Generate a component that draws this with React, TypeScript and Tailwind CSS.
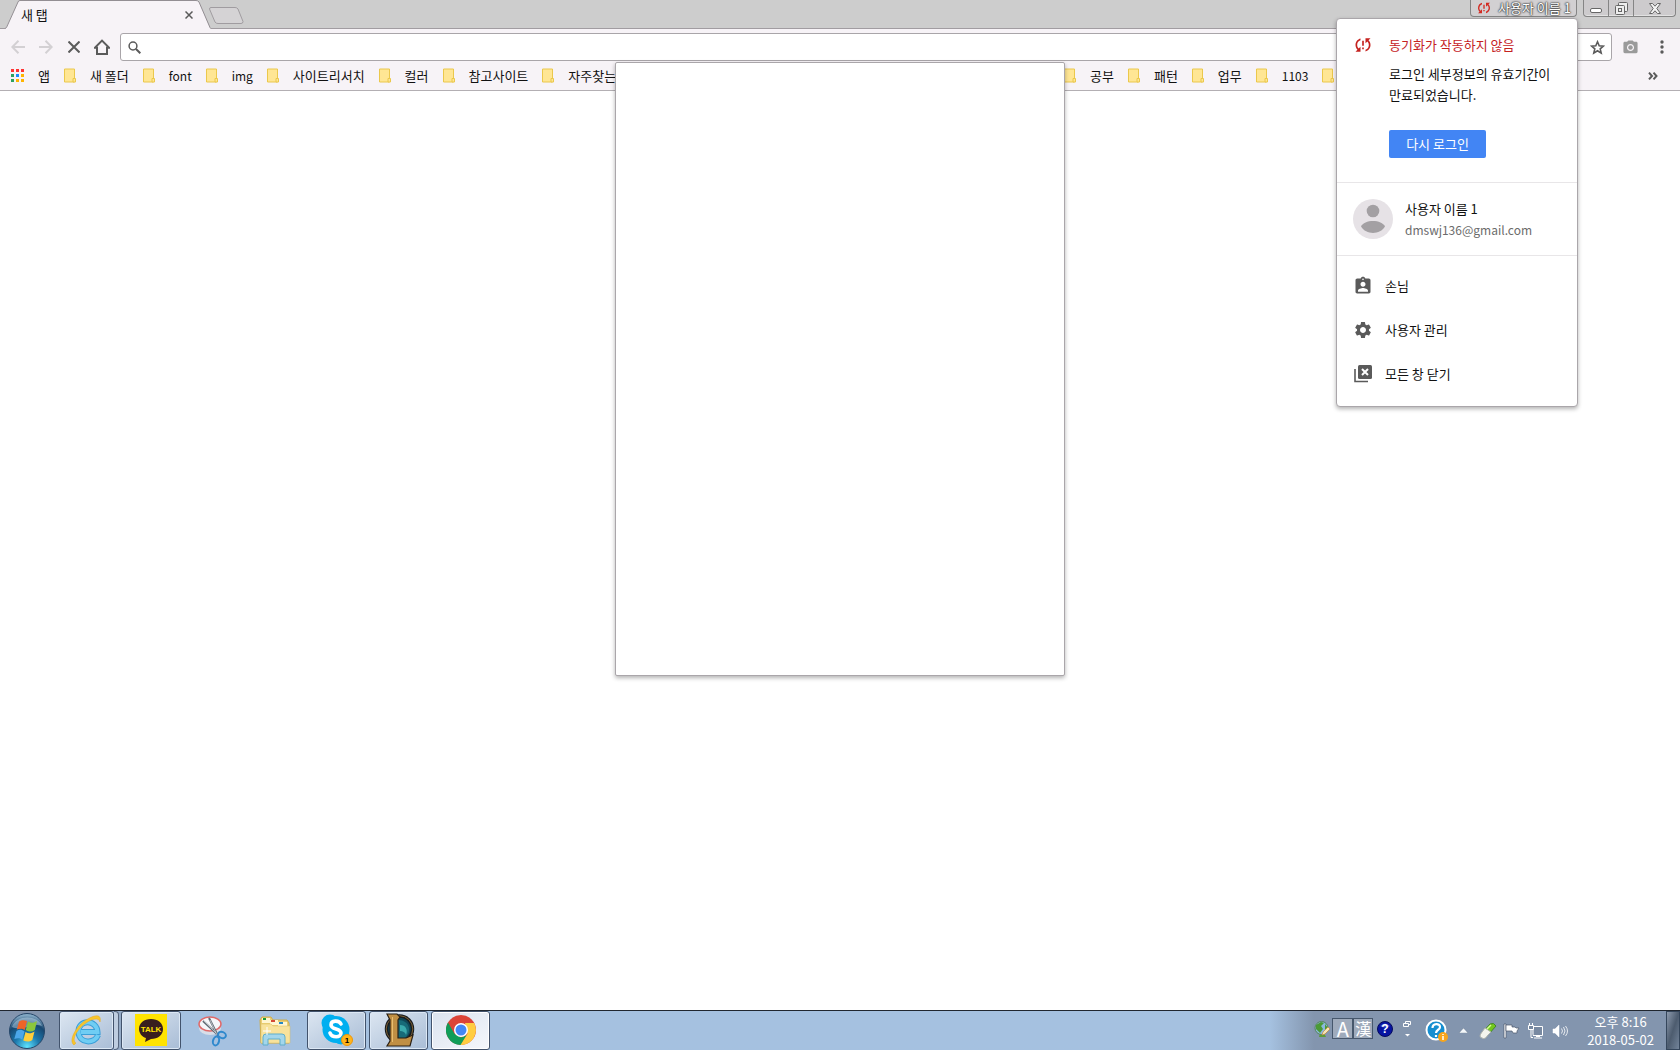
import React from 'react';
import { MdAssignmentInd, MdPhotoCamera, MdSettings, MdSyncProblem } from 'react-icons/md';

const leftBookmarks = ['새 폴더', 'font', 'img', '사이트리서치', '컬러', '참고사이트', '자주찾는'];
const rightBookmarks = ['공부', '패턴', '업무', '1103', ''];

function FolderIcon() {
    return (
        <svg width="12" height="15" viewBox="0 0 12 15" className="shrink-0">
            <path d="M.5 1h10v13h-10z" fill="#ffe694" stroke="#ebc84c" />
            <path d="M9 10.5h2.5V14H9z" fill="#ffe694" stroke="#ebc84c" />
        </svg>
    );
}

function Bookmark({ label }: { label: string }) {
    const latin = /^[a-z0-9]+$/.test(label);
    return (
        <a href="#" aria-label={label || 'folder'} className="flex shrink-0 items-center gap-3.5 whitespace-nowrap">
            <FolderIcon />
            {label && <span className={latin ? 'text-xs' : ''}>{label}</span>}
        </a>
    );
}

function TabStrip() {
    return (
        <div className="flex h-[29px] items-start border-b border-[#a19ca1] bg-[#cdcdcd]">
            <div className="relative z-10 ml-[5px] flex h-[29px] w-[206px] shrink-0 items-center pr-3.5 pl-4">
                <svg className="absolute inset-0" width="206" height="29" viewBox="0 0 206 29" fill="none">
                    <path d="M0 29 L1 28 L13 2 Q13.500 .5 15 .5 H191 Q193 .5 194 2 L205 28 L206 29Z" fill="#f7f3f7" />
                    <path d="M0 28.500 L1.500 27.500 L13 2 Q13.500 .5 15 .5 H191 Q193 .5 194 2 L205 27.500 L206 28.500" stroke="#938e93" />
                </svg>
                <span className="relative flex-1">새 탭</span>
                <button aria-label="탭 닫기" className="relative flex h-4 w-4 items-center justify-center">
                    <svg width="8" height="8" viewBox="0 0 8 8" stroke="#5a5a5a" strokeWidth="1.500"><path d="M.5 .5l7 7M7.500 .5l-7 7" /></svg>
                </button>
            </div>
            <button aria-label="새 탭" className="-ml-0.5 pt-[7px]">
                <svg width="35" height="18" viewBox="0 0 35 18"><path d="M2 .5H26Q28 .5 29 2L34 14.500Q34 16.500 32 16.500H9Q7 16.500 6 15L.5 2Q.5 .5 2 .5Z" fill="#d5d3d5" stroke="#a09ca0" /></svg>
            </button>
            <div className="ml-auto flex gap-1.5 pr-1">
                <button className="flex h-[17px] w-[107px] items-center justify-center gap-1.5 rounded-b border border-t-0 border-[#858585] bg-[#d2d0d2]">
                    <MdSyncProblem size={16} color="#d32a22" />
                    <span className="whitespace-nowrap text-white [text-shadow:0_0_1px_#333,0_0_2px_#333,0_0_2px_#333]">사용자 이름 1</span>
                </button>
                <div className="flex h-[17px] rounded-b border border-t-0 border-[#858585] bg-[#cdcbcd] shadow-[inset_0_-1px_0_#e2e2e2]">
                    <button aria-label="최소화" className="flex w-[25px] items-center justify-center border-r border-[#858585]">
                        <svg width="12" height="5" className="mt-1"><rect x=".5" y=".5" width="11" height="4" rx="1.500" fill="#fff" stroke="#666" /></svg>
                    </button>
                    <button aria-label="이전 크기로 복원" className="flex w-[25px] items-center justify-center border-r border-[#858585]">
                        <svg width="13" height="13" viewBox="0 0 13 13" fill="#eee" stroke="#666">
                            <rect x="3.500" y=".5" width="9" height="9" rx="1" />
                            <rect x=".5" y="3.500" width="9" height="9" rx="1" />
                            <rect x="3.500" y="6.500" width="3" height="3" />
                        </svg>
                    </button>
                    <button aria-label="닫기" className="flex w-[41px] items-center justify-center">
                        <svg width="12" height="11" viewBox="0 0 12 11"><path d="M.5 .5h3L6 3.200 8.500 .5h3L7.800 5.500l3.700 5h-3L6 7.800 3.500 10.500h-3l3.700-5z" fill="#f4f4f4" stroke="#666" /></svg>
                    </button>
                </div>
            </div>
        </div>
    );
}

function Toolbar() {
    return (
        <div className="flex h-[33px] items-center bg-[#f7f3f7] pt-1 pr-0.5 pl-1 pb-px">
            <button aria-label="뒤로" className="flex w-7 justify-center">
                <svg width="14" height="14" viewBox="0 0 14 14" fill="none" stroke="#d3d0d3" strokeWidth="2"><path d="M14 7H1.500M7.500 .8L1.300 7l6.200 6.200" /></svg>
            </button>
            <button aria-label="앞으로" className="flex w-7 justify-center">
                <svg width="14" height="14" viewBox="0 0 14 14" fill="none" stroke="#d3d0d3" strokeWidth="2"><path d="M0 7h12.500M6.500 .8L12.700 7l-6.200 6.200" /></svg>
            </button>
            <button aria-label="중지" className="flex w-7 justify-center">
                <svg width="12" height="12" viewBox="0 0 12 12" stroke="#5a5a5a" strokeWidth="2"><path d="M.5 .5l11 11M11.500 .5l-11 11" /></svg>
            </button>
            <button aria-label="홈" className="flex w-7 justify-center">
                <svg width="16" height="16" viewBox="0 0 16 16" fill="none" stroke="#5a5a5a" strokeWidth="2"><path d="M.8 8.800H3V15h10V8.800h2.200L8 1.600z" /></svg>
            </button>
            <div className="ml-1 flex h-7 flex-1 items-center rounded-[3px] border border-[#a9a5a9] bg-white pr-1.5 pl-[7px]">
                <svg width="13" height="13" viewBox="0 0 13 13" fill="none" stroke="#5a5a5a"><circle cx="5" cy="5" r="3.900" strokeWidth="1.500" /><path d="M8 8l4.300 4.300" strokeWidth="2" /></svg>
                <input aria-label="주소창" type="text" className="h-full min-w-0 flex-1 px-2 outline-none" />
                <button aria-label="북마크">
                    <svg width="15" height="15" viewBox="0 0 15 15" fill="none" stroke="#5a5a5a" strokeWidth="1.600">
                        <path d="M7.500 1.800l1.700 3.900 4.200.4-3.200 2.800 1 4.200-3.700-2.300-3.700 2.300 1-4.200L1.600 6.100l4.200-.4z" />
                    </svg>
                </button>
            </div>
            <button aria-label="캡처" className="ml-0.5 flex w-8 justify-center"><MdPhotoCamera size={17} color="#9a9a9a" /></button>
            <button aria-label="메뉴" className="flex w-8 justify-center">
                <svg width="4" height="14" viewBox="0 0 4 14" fill="#5a5a5a"><circle cx="2" cy="2" r="1.700" /><circle cx="2" cy="7" r="1.700" /><circle cx="2" cy="12" r="1.700" /></svg>
            </button>
        </div>
    );
}

function BookmarkBar() {
    const colors = ['#f33', '#f33', '#f33', '#2da160', '#1a8cff', '#ffb400', '#2da160', '#ffb400', '#ffb400'];
    return (
        <nav className="flex h-[29px] items-center border-b border-[#b3afb3] bg-[#f7f3f7] pb-px">
            <div className="flex w-[1064px] shrink-0 items-center gap-3.5 pl-[11px]">
                <a href="#" className="flex shrink-0 items-center gap-3.5">
                    <span className="grid grid-cols-3 gap-0.5">
                        {colors.map((c, i) => <span key={i} className="h-[3px] w-[3px]" style={{ backgroundColor: c }} />)}
                    </span>
                    앱
                </a>
                {leftBookmarks.map((b) => <Bookmark key={b} label={b} />)}
            </div>
            <div className="flex items-center gap-3.5">
                {rightBookmarks.map((b) => <Bookmark key={b} label={b} />)}
            </div>
            <button aria-label="북마크 더보기" className="mr-[22px] ml-auto">
                <svg width="10" height="8" viewBox="0 0 10 8" fill="none" stroke="#5a5a5a" strokeWidth="2"><path d="M1 .7L4 4 1 7.300M5.500 .7l3 3.300-3 3.300" /></svg>
            </button>
        </nav>
    );
}

function CloseWindowsIcon() {
    return (
        <svg width="18" height="18" viewBox="0 0 18 18">
            <path d="M1 4v12.500h13" fill="none" stroke="#5a5a5a" strokeWidth="1.600" />
            <rect x="4" y="0" width="14" height="14" rx="1.500" fill="#5a5a5a" />
            <path d="M8 4l6 6M14 4l-6 6" stroke="#fff" strokeWidth="2" />
        </svg>
    );
}

function ProfileMenu() {
    return (
        <div className="absolute top-[18px] right-[102px] z-30 w-[242px] rounded-sm border border-[#aaa6aa] bg-white pb-2.5 shadow-[0_2px_4px_rgba(0,0,0,0.3)]">
            <section className="flex gap-4 border-b border-[#e8e6e8] pt-4 pb-6 pl-4">
                <MdSyncProblem size={20} color="#c5221f" className="shrink-0" />
                <div>
                    <h2 className="leading-5 text-[#c5221f]">동기화가 작동하지 않음</h2>
                    <p className="mt-2 leading-[21px] whitespace-nowrap">로그인 세부정보의 유효기간이<br />만료되었습니다.</p>
                    <button className="mt-[25px] h-7 w-[97px] rounded-xs bg-[#4285f4] text-white">다시 로그인</button>
                </div>
            </section>
            <section className="flex h-[73px] items-center gap-3 border-b border-[#e8e6e8] pl-4">
                <svg width="40" height="40" viewBox="0 0 40 40">
                    <circle cx="20" cy="20" r="20" fill="#e6e2e6" />
                    <circle cx="20" cy="12" r="6.300" fill="#a3a0a3" />
                    <path d="M8 27.500C11 20 29 20 32 27.500 27 36 13 36 8 27.500z" fill="#a3a0a3" />
                </svg>
                <div className="leading-[21px]">
                    <p>사용자 이름 1</p>
                    <p className="text-xs leading-[21px] text-[#6b6b6b]">dmswj136@gmail.com</p>
                </div>
            </section>
            <div className="flex flex-col pt-2">
                <button className="flex h-11 items-center gap-3 pl-4"><MdAssignmentInd size={20} color="#5a5a5a" />손님</button>
                <button className="flex h-11 items-center gap-3 pl-4"><MdSettings size={20} color="#5a5a5a" />사용자 관리</button>
                <button className="flex h-11 items-center gap-[13px] pl-[17px]"><CloseWindowsIcon />모든 창 닫기</button>
            </div>
        </div>
    );
}

function StartOrb() {
    return (
        <svg width="38" height="38" viewBox="0 0 38 38">
            <defs>
                <radialGradient id="orb" cx=".5" cy=".95" r=".9">
                    <stop offset="0" stopColor="#5ee4ff" />
                    <stop offset=".4" stopColor="#1c78ac" />
                    <stop offset=".75" stopColor="#174770" />
                    <stop offset="1" stopColor="#83a9c4" />
                </radialGradient>
            </defs>
            <circle cx="19" cy="19" r="17.500" fill="url(#orb)" stroke="#26476a" />
            <path d="M4 15C8 3 29 2 34 14 25 10 15 20 4 15z" fill="#c7deed" opacity=".45" />
            <path d="M11 9.500c3-2 5.500-1.500 8-.5l-2.200 9c-3-2-5-1.500-8-.5z" fill="#ee6428" />
            <path d="M20 9.500c3 2 6 1.500 9-.5l-2.200 9c-3 2-5.500 2-9 0z" fill="#8cc63c" />
            <path d="M8.500 19c3-2 5.500-1.500 8 .5l-2.200 8c-3-2-5-1.500-8-.5z" fill="#4ba6e8" />
            <path d="M17.500 20c3 2 6 1.500 9-.5l-2.200 8.500c-3 2-5.500 2-9 .5z" fill="#ffce3a" />
        </svg>
    );
}

function IeIcon() {
    return (
        <svg width="32" height="32" viewBox="0 0 32 32" fill="none">
            <path d="M27 21C24 30 8 30 7.500 18 7 5 26 5 26.500 18H10" stroke="#3a9fd8" strokeWidth="6" />
            <path d="M27 21C24 30 8 30 7.500 18 7 5 26 5 26.500 18H10" stroke="#6fcdf4" strokeWidth="4" />
            <path d="M3 31C-3 27 5 12 15 6 23 1 31-1 29 8 28 3 21 5 15 9 6 15 0 26 5 29z" fill="#f8c52b" stroke="#e7a920" strokeWidth=".5" />
        </svg>
    );
}

function TalkIcon() {
    return (
        <svg width="32" height="32" viewBox="0 0 32 32">
            <path d="M0 0h32v32H0z" fill="#ffe300" />
            <path d="M16 5c7 0 12 4 12 10s-5 10-12 10l-6 3 1-4C7 23 4 19 4 15 4 9 9 5 16 5z" fill="#381e1e" />
            <text x="16" y="18" textAnchor="middle" fontSize="8" fontWeight="bold" fill="#ffe300" fontFamily="Liberation Sans">TALK</text>
        </svg>
    );
}

function SnipIcon() {
    return (
        <svg width="30" height="32" viewBox="0 0 30 32" fill="none">
            <ellipse cx="12" cy="13" rx="11" ry="7" fill="#d8dee8" />
            <ellipse cx="12" cy="9" rx="11" ry="7" fill="#f5f6f9" stroke="#e06a6a" strokeWidth="1.500" />
            <path d="M5 6l14 13M11 3l9 18" stroke="#626b74" strokeWidth="2" />
            <path d="M6 6l12 12M12 5l7 15" stroke="#d7dce0" strokeWidth=".7" />
            <ellipse cx="24" cy="20" rx="4" ry="3" stroke="#3089cd" strokeWidth="2" transform="rotate(20 24 20)" />
            <ellipse cx="18" cy="26" rx="3" ry="4.500" stroke="#3089cd" strokeWidth="2" transform="rotate(15 18 26)" />
        </svg>
    );
}

function ExplorerIcon() {
    return (
        <svg width="34" height="32" viewBox="0 0 34 32">
            <path d="M2 5l2-3h9l2 3h14l2 3v20H3z" fill="#edcf73" stroke="#cfae4b" />
            <path d="M4 3h8v5H4zM12 5h8v5h-8zM20 7h9v5h-9z" fill="#fff5d0" />
            <path d="M5 3h3v2H5z" fill="#1c9b38" /><path d="M13 5h4v2h-4z" fill="#d54836" /><path d="M21 7h4v2h-4z" fill="#2588c5" />
            <path d="M3 9h10l2 2h17v17H3z" fill="#f8e29b" stroke="#d9bd65" strokeWidth=".5" />
            <path d="M5 30V22q0-3 3-3h16q3 0 3 3v8h-5v-6H10v6z" fill="#a3d6eb" stroke="#5faecb" />
            <path d="M9 12v8M5 16h8" stroke="#fff" />
        </svg>
    );
}

function SkypeIcon() {
    return (
        <svg width="32" height="32" viewBox="0 0 32 32">
            <circle cx="9" cy="9" r="8.500" fill="#00aff0" /><circle cx="20" cy="22" r="8.500" fill="#00aff0" />
            <circle cx="15" cy="15.500" r="13.500" fill="#00aff0" />
            <path d="M20 10c-2-4-10-4-10 1 0 5 10 3 10 8 0 5-9 5-11 0" fill="none" stroke="#fff" strokeWidth="3.600" strokeLinecap="round" />
            <circle cx="26" cy="26" r="5.500" fill="#ffb51b" stroke="#ec950b" />
            <text x="26" y="29" textAnchor="middle" fontSize="8" fontWeight="bold" fontFamily="Liberation Sans">1</text>
        </svg>
    );
}

function LeagueIcon() {
    return (
        <svg width="32" height="34" viewBox="0 0 32 34">
            <circle cx="16.500" cy="16" r="13" fill="#0f4656" stroke="#171b20" strokeWidth="3.500" />
            <circle cx="16.500" cy="16" r="13.300" fill="none" stroke="#7d6233" />
            <path d="M15 7c12 0 14 12 7 18H15z" fill="#176a78" />
            <path d="M17 12c6 0 8 5 6 10-1-3-3-4-6-4z" fill="#3aa9ac" />
            <path d="M4 1h10l3 3-2 3v18h8l7-3-3 11H4l3-5V7z" fill="#c08f44" stroke="#2b2115" strokeWidth="1.200" />
            <path d="M9.500 4v25" stroke="#e8be70" />
        </svg>
    );
}

function ChromeIcon() {
    return (
        <svg width="30" height="30" viewBox="0 0 30 30">
            <circle cx="15" cy="15" r="15" fill="#dc4437" />
            <path d="M2 7.500L8.500 18.700 15 22.500 21 20 15 30A15 15 0 0 1 2 7.500z" fill="#109d58" />
            <path d="M28.200 8A15 15 0 0 1 14.500 30L21.500 18.800 19 8z" fill="#ffcd41" />
            <circle cx="15" cy="15" r="7" fill="#fff" />
            <circle cx="15" cy="15" r="5.500" fill="#4387f5" />
        </svg>
    );
}

const taskButton = 'flex h-[39px] items-center justify-center rounded-[3px] border border-[#42536c] bg-linear-to-br from-[#dce6f1] to-[#a9bdd6] pb-0.5 shadow-[inset_0_0_0_1px_#dce8f5]';

function Tray() {
    return (
        <div className="ml-auto flex h-full items-center bg-linear-to-r from-[#a5c1e0] to-[#8395ae] to-[44px] pb-1 pl-[43px]">
            <svg width="18" height="18" viewBox="0 0 18 18">
                <path d="M6 17l1-4h4l2 4z" fill="#5c9a3a" />
                <circle cx="8.500" cy="8" r="6.500" fill="#8cb8de" stroke="#57865a" />
                <path d="M3 5l5-3 3 1-3 3 2 3-3 4-4-4zM12 4l3 4-3 2z" fill="#4b9a35" />
                <path d="M9 15l1-3 5-5 2 2-5 5z" fill="#f4e6b8" stroke="#c98a3c" strokeWidth=".7" />
            </svg>
            <button className="ml-px h-[21px] w-[21px] border border-[#46576c] bg-[#9fabbc] text-xl leading-[19px] text-white">A</button>
            <button className="h-[21px] w-5 border border-[#46576c] bg-[#9fabbc] text-base leading-[17px] text-white">漢</button>
            <svg width="16" height="16" viewBox="0 0 16 16" className="ml-1">
                <circle cx="8" cy="8" r="7.500" fill="#0714a1" stroke="#050b5d" />
                <path d="M3 5Q8 0 13 5 8 8 3 5z" fill="#6875df" opacity=".6" />
                <text x="8" y="12" textAnchor="middle" fontSize="12" fontWeight="bold" fill="#fff" fontFamily="Liberation Sans">?</text>
            </svg>
            <svg width="10" height="18" viewBox="0 0 10 18" className="ml-2.5" fill="none" stroke="#fff">
                <path d="M2.500 3V1.500h5v3H6M.5 3.500h5v3h-5z" /><path d="M2 14h5l-2.500 2.500z" fill="#fff" stroke="none" />
            </svg>
            <div className="flex items-center pt-1">
                <svg width="24" height="24" viewBox="0 0 24 24" className="ml-3">
                    <circle cx="11" cy="11" r="9.500" fill="#168ed0" stroke="#fff" strokeWidth="2" />
                    <path d="M7.500 9c0-5 7.500-5 7.500-1 0 3-4 2.500-4 6M11 16v2" fill="none" stroke="#fff" strokeWidth="2.200" />
                    <circle cx="18" cy="18" r="5" fill="#f7a51c" /><path d="M18 15v1M18 17v4" stroke="#fff" strokeWidth="1.500" />
                </svg>
                <button aria-label="숨겨진 아이콘 표시" className="ml-2.5"><svg width="9" height="5"><path d="M0 5l4.500-5L9 5z" fill="#f4f8fb" stroke="#46576c" strokeWidth=".3" /></svg></button>
                <svg width="18" height="18" viewBox="0 0 18 18" className="ml-[11px]">
                    <path d="M3 11L11 2q4-2 6 2L9 13z" fill="#72c71f" stroke="#43852d" />
                    <path d="M3 10q-4 5 0 6 3 2 6-3l3-3-6-4z" fill="#f4f4ee" stroke="#aeb2ac" /><path d="M8 7l4-4" stroke="#d7ff95" strokeWidth="1.500" />
                </svg>
                <svg width="17" height="16" viewBox="0 0 17 16" className="ml-1.5" fill="#fff" stroke="#4b586a" strokeWidth=".7"><path d="M1 1h2v14H1z" /><path d="M3 2h6v2h3l1 1h3l-2 3v2h-4L9 8H3z" /></svg>
                <svg width="16" height="16" viewBox="0 0 16 16" className="ml-2" fill="#7889a1" stroke="#fff"><path d="M5 3.500h9.500v9H5zM6 15h8M8 13.500h4" /><path d="M1.500 0v3M4.500 0v3M.5 2.500h5v4h-5zM3 6.500v8h2" /></svg>
                <svg width="16" height="16" viewBox="0 0 16 16" className="ml-2" fill="#fff" stroke="#fff"><path d="M1 6h2l4-4v12l-4-4H1z" strokeWidth=".5" /><path d="M9.500 5.500q2 2.500 0 5M11.500 4q3 4 0 8M13.500 3q4 5 0 10" fill="none" strokeWidth=".8" /></svg>
            </div>
            <time className="mr-3 ml-[19px] pt-1 text-center leading-[18px] whitespace-nowrap text-white">오후 8:16<br />2018-05-02</time>
        </div>
    );
}

function Taskbar() {
    return (
        <footer className="flex h-10 items-center border-t border-[#20262f] bg-[#a5c1e0] bg-linear-to-r from-[#8395ae] from-[60px] to-[#a5c1e0] to-[180px]">
            <button aria-label="시작" className="ml-2"><StartOrb /></button>
            <button aria-label="Internet Explorer" className={`${taskButton} ml-[13px] w-[55px]`}><IeIcon /></button>
            <span className="h-full w-[5px] rounded-r-sm border border-l-0 border-[#55657e] bg-[#becde0]" />
            <button aria-label="카카오톡" className={`${taskButton} ml-0.5 w-[60px]`}><TalkIcon /></button>
            <button aria-label="캡처 도구" className="ml-[17px]"><SnipIcon /></button>
            <button aria-label="탐색기" className="ml-[30px]"><ExplorerIcon /></button>
            <div className="ml-[15px] flex gap-[3px]">
                <button aria-label="Skype" className={`${taskButton} w-[59px]`}><SkypeIcon /></button>
                <button aria-label="League of Legends" className={`${taskButton} w-[59px]`}><LeagueIcon /></button>
                <button aria-label="Chrome" className="flex h-[39px] w-[59px] items-center justify-center rounded-[3px] border border-[#42536c] bg-linear-to-br from-[#dbe3ee] to-[#f4f7fc] pb-0.5 shadow-[inset_0_0_0_1px_#fff]"><ChromeIcon /></button>
            </div>
            <Tray />
            <button aria-label="바탕 화면 보기" className="h-full w-3.5 border border-[#35465b] bg-linear-to-br from-[#8d9aad] via-[#4d5c6f] to-[#73849a]" />
        </footer>
    );
}

export default function App() {
    return (
        <div className="relative flex min-h-screen flex-col bg-white font-['Noto_Sans_CJK_KR',sans-serif] text-[13px] leading-4 text-[#111]">
            <TabStrip />
            <Toolbar />
            <BookmarkBar />
            <main className="flex-1" />
            <div className="absolute top-[62px] left-1/2 z-20 h-[614px] w-[450px] -translate-x-1/2 rounded-xs border border-[#aaa6aa] bg-white shadow-[0_2px_4px_rgba(0,0,0,0.3)]" />
            <ProfileMenu />
            <Taskbar />
        </div>
    );
}
